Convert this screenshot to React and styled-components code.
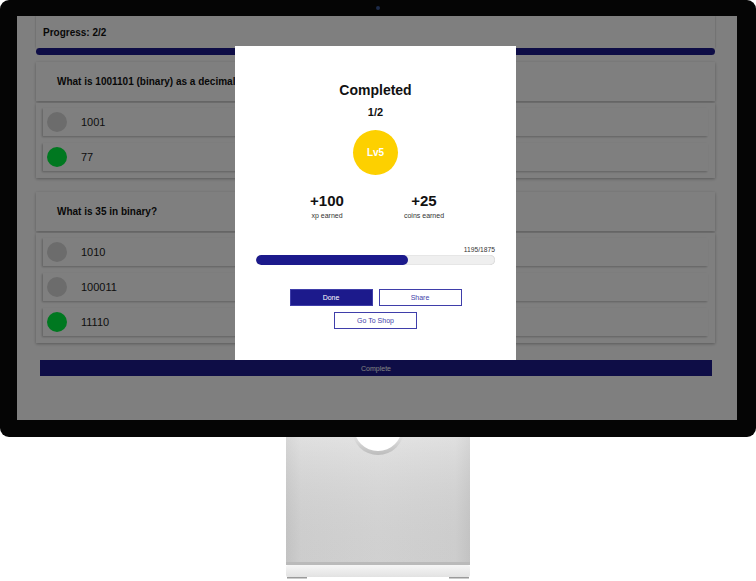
import React from 'react'
import styled, { createGlobalStyle } from 'styled-components'

const navy = '#1c1a8c'

const GlobalStyle = createGlobalStyle`
  html, body {
    margin: 0;
    padding: 0;
    background: #fff;
  }
  body {
    font-family: "Liberation Sans", Arial, sans-serif;
  }
`

const Page = styled.div`
  width: 756px;
  display: flex;
  flex-direction: column;
  align-items: center;
`

const Monitor = styled.div`
  position: relative;
  box-sizing: border-box;
  width: 756px;
  height: 437px;
  padding: 16px 19px 17px 17px;
  background: #050505;
  border-radius: 9px;
`

const Camera = styled.div`
  position: absolute;
  top: 6px;
  left: 376px;
  width: 4px;
  height: 4px;
  border-radius: 50%;
  background: #1d2b4a;
`

const Screen = styled.div`
  position: relative;
  width: 720px;
  height: 404px;
  background: #fff;
  overflow: hidden;
`

const Quiz = styled.div`
  margin-left: 19px;
  width: 679px;
  display: flex;
  flex-direction: column;
  color: #111;
`

const ProgressHeader = styled.div`
  height: 32px;
  display: flex;
  align-items: center;
  padding-left: 7px;
  font-size: 10px;
  font-weight: bold;
  box-shadow: 0 0 2px rgba(0, 0, 0, 0.3);
`

const ProgressBar = styled.div`
  height: 7px;
  border-radius: 4px;
  background: ${navy};
`

const Questions = styled.div`
  margin-top: 7px;
  display: flex;
  flex-direction: column;
  gap: 14px;
`

const QuestionCard = styled.div`
  display: flex;
  flex-direction: column;
  gap: 2px;
`

const QuestionHeader = styled.div`
  height: 39px;
  display: flex;
  align-items: center;
  padding-left: 21px;
  font-size: 10px;
  font-weight: bold;
  background: #fff;
  box-shadow: 0 1px 3px rgba(0, 0, 0, 0.3);
`

const Options = styled.div`
  display: flex;
  flex-direction: column;
  gap: 7px;
  padding: 5px 7px 7px;
  background: #fff;
  box-shadow: 0 1px 3px rgba(0, 0, 0, 0.3);
`

const Option = styled.div`
  height: 28px;
  display: flex;
  align-items: center;
  gap: 14px;
  padding-left: 4px;
  font-size: 11px;
  color: #222;
  background: #fff;
  box-shadow: -1px 1px 2px rgba(0, 0, 0, 0.25);
`

const Dot = styled.div`
  width: 20px;
  height: 20px;
  border-radius: 50%;
  background: ${props => props.correct ? '#00f040' : '#d9d9d9'};
`

const CompleteButton = styled.div`
  margin: 17px 3px 0 4px;
  height: 16px;
  display: flex;
  align-items: center;
  justify-content: center;
  background: ${navy};
  color: #fff;
  font-size: 7px;
`

const Overlay = styled.div`
  position: absolute;
  inset: 0;
  box-sizing: border-box;
  display: flex;
  justify-content: center;
  align-items: flex-start;
  padding: 30px 3px 0 0;
  background: rgba(0, 0, 0, 0.5);
`

const Modal = styled.div`
  box-sizing: border-box;
  width: 281px;
  height: 314px;
  padding-top: 36px;
  display: flex;
  flex-direction: column;
  align-items: center;
  background: #fff;
  color: #111;
`

const Title = styled.div`
  font-size: 14px;
  line-height: 16px;
  font-weight: bold;
`

const Score = styled.div`
  margin-top: 8px;
  font-size: 11px;
  line-height: 13px;
  font-weight: bold;
`

const LevelBadge = styled.div`
  margin-top: 11px;
  width: 45px;
  height: 45px;
  border-radius: 50%;
  display: flex;
  align-items: center;
  justify-content: center;
  background: #fdd000;
  color: #fff;
  font-size: 10px;
  font-weight: bold;
`

const Stats = styled.div`
  margin-top: 17px;
  display: flex;
  gap: 17px;
`

const Stat = styled.div`
  width: 80px;
  display: flex;
  flex-direction: column;
  align-items: center;
`

const StatValue = styled.div`
  font-size: 15px;
  line-height: 17px;
  font-weight: bold;
`

const StatLabel = styled.div`
  margin-top: 2px;
  font-size: 7px;
  line-height: 9px;
  color: #333;
`

const XpBlock = styled.div`
  margin-top: 26px;
  width: 239px;
  display: flex;
  flex-direction: column;
  gap: 1px;
`

const XpCount = styled.div`
  text-align: right;
  font-size: 6.7px;
  line-height: 8px;
  color: #333;
`

const XpTrack = styled.div`
  height: 10px;
  border-radius: 5px;
  background: #efefef;
  box-shadow: inset 0 0 1px rgba(0, 0, 0, 0.35);
  overflow: hidden;
`

const XpFill = styled.div`
  height: 100%;
  border-radius: 5px;
  background: ${navy};
`

const Actions = styled.div`
  margin-top: 24px;
  display: flex;
  flex-direction: column;
  align-items: center;
  gap: 6px;
`

const ActionRow = styled.div`
  display: flex;
  gap: 6px;
`

const ActionButton = styled.button`
  box-sizing: border-box;
  width: 83px;
  height: 17px;
  padding: 0;
  border: 1px solid #3f3eaa;
  background: ${props => props.filled ? navy : '#fff'};
  color: ${props => props.filled ? '#fff' : '#3f3eaa'};
  font-family: inherit;
  font-size: 7px;
`

const StandSvg = styled.svg`
  display: block;
`

const questions = [
  { text: 'What is 1001101 (binary) as a decimal?', options: [['1001', false], ['77', true]] },
  { text: 'What is 35 in binary?', options: [['1010', false], ['100011', false], ['11110', true]] },
]

const Stand = () => (
  <StandSvg width="184" height="142" viewBox="0 0 184 142">
    <defs>
      <linearGradient id="standSide" x1="0" x2="1" y1="0" y2="0">
        <stop offset="0" stopColor="#cfcfcf" />
        <stop offset="0.08" stopColor="#dadada" />
        <stop offset="0.5" stopColor="#dedede" />
        <stop offset="0.92" stopColor="#dadada" />
        <stop offset="1" stopColor="#cfcfcf" />
      </linearGradient>
      <linearGradient id="standShade" x1="0" x2="0" y1="0" y2="1">
        <stop offset="0" stopColor="#fff" stopOpacity="0.15" />
        <stop offset="1" stopColor="#000" stopOpacity="0.06" />
      </linearGradient>
      <linearGradient id="standFoot" x1="0" x2="0" y1="0" y2="1">
        <stop offset="0" stopColor="#f6f6f6" />
        <stop offset="1" stopColor="#e2e2e2" />
      </linearGradient>
      <linearGradient id="holeRim" x1="0" x2="0" y1="0" y2="1">
        <stop offset="0.5" stopColor="#f0f0f0" />
        <stop offset="1" stopColor="#bcbcbc" />
      </linearGradient>
    </defs>
    <rect x="0" y="0" width="184" height="127" fill="url(#standSide)" />
    <rect x="0" y="0" width="184" height="127" fill="url(#standShade)" />
    <rect x="0" y="125" width="184" height="3" fill="#bababa" />
    <rect x="0" y="128" width="184" height="12" rx="2" fill="url(#standFoot)" />
    <rect x="1" y="140" width="20" height="1.5" fill="#9a9a9a" />
    <rect x="163" y="140" width="20" height="1.5" fill="#9a9a9a" />
    <circle cx="92" cy="-8" r="26" fill="url(#holeRim)" />
    <circle cx="92" cy="-10" r="24" fill="#fff" />
  </StandSvg>
)

export default function App() {
  const xp = 1195
  const xpNext = 1875
  return (
    <Page>
      <GlobalStyle />
      <Monitor>
        <Camera />
        <Screen>
          <Quiz>
            <ProgressHeader>Progress: 2/2</ProgressHeader>
            <ProgressBar />
            <Questions>
              {questions.map(q => (
                <QuestionCard key={q.text}>
                  <QuestionHeader>{q.text}</QuestionHeader>
                  <Options>
                    {q.options.map(([label, correct]) => (
                      <Option key={label}>
                        <Dot correct={correct} />
                        {label}
                      </Option>
                    ))}
                  </Options>
                </QuestionCard>
              ))}
            </Questions>
            <CompleteButton>Complete</CompleteButton>
          </Quiz>
          <Overlay>
            <Modal>
              <Title>Completed</Title>
              <Score>1/2</Score>
              <LevelBadge>Lv5</LevelBadge>
              <Stats>
                <Stat>
                  <StatValue>+100</StatValue>
                  <StatLabel>xp earned</StatLabel>
                </Stat>
                <Stat>
                  <StatValue>+25</StatValue>
                  <StatLabel>coins earned</StatLabel>
                </Stat>
              </Stats>
              <XpBlock>
                <XpCount>{xp}/{xpNext}</XpCount>
                <XpTrack>
                  <XpFill style={{ width: `${(xp / xpNext) * 100}%` }} />
                </XpTrack>
              </XpBlock>
              <Actions>
                <ActionRow>
                  <ActionButton filled>Done</ActionButton>
                  <ActionButton>Share</ActionButton>
                </ActionRow>
                <ActionButton>Go To Shop</ActionButton>
              </Actions>
            </Modal>
          </Overlay>
        </Screen>
      </Monitor>
      <Stand />
    </Page>
  )
}
